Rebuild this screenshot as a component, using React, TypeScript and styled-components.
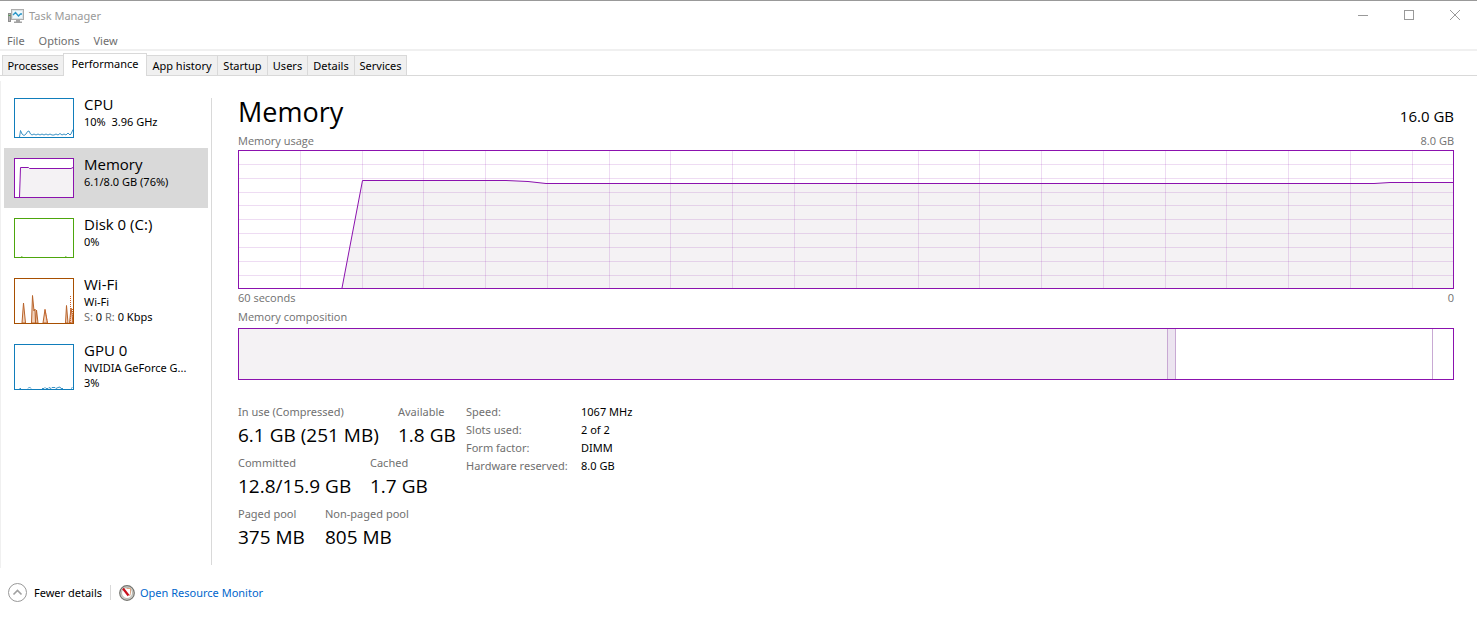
import React, { useState } from 'react';
import styled, { createGlobalStyle } from 'styled-components';

const purple = '#8b12ae';
const blue = '#117dbb';
const green = '#4da60c';
const brown = '#a74f01';
const displayFont = '"Open Sans", "Noto Sans", sans-serif';

const GlobalStyle = createGlobalStyle`
  *, *::before, *::after { box-sizing: border-box; }
  body {
    margin: 0;
    background: #fff;
    color: #000;
    font-family: "Noto Sans", "Open Sans", sans-serif;
    font-size: 11px;
    line-height: 16px;
  }
  button { font: inherit; color: inherit; }
  h1, h2, p, dl, dd, figure { margin: 0; font-weight: 400; }
`;

const Window = styled.div`
  display: flex;
  flex-direction: column;
  min-height: 100vh;
  border-top: 1px solid #999;
`;

const TitleBar = styled.header`
  display: flex;
  align-items: center;
  height: 29px;
  padding-left: 8px;
  color: #999;
`;

const AppTitle = styled.span`
  flex: 1;
  margin-left: 5px;
`;

const CaptionButton = styled.button`
  display: grid;
  place-items: center;
  width: 46px;
  height: 29px;
  padding: 0 0 0 3px;
  border: 0;
  background: none;
  color: #999;
`;

const MenuBar = styled.nav`
  display: flex;
  height: 21px;
  padding-top: 2px;
  border-bottom: 2px solid #f0f0f0;
`;

const MenuButton = styled.button`
  padding: 0 7px;
  border: 0;
  background: none;
  color: #6d6d6d;
`;

const TabStrip = styled.div`
  display: flex;
  align-items: flex-end;
  height: 25px;
  padding-left: 2px;
  border-bottom: 1px solid #d9d9d9;
`;

const Tab = styled.button<{ $width: number }>`
  width: ${p => p.$width}px;
  height: 20px;
  padding: 0;
  border: 1px solid #d9d9d9;
  border-width: 1px 1px 0 0;
  background: #f0f0f0;
  white-space: nowrap;
  &:first-child { border-left-width: 1px; }
  &[aria-selected='true'] {
    height: 23px;
    margin: 0 0 -1px -1px;
    padding-bottom: 2px;
    border-left-width: 1px;
    background: #fff;
  }
`;

const Content = styled.div`
  display: flex;
  margin-top: 5px;
  padding-bottom: 3px;
  border-left: 1px solid #f0f0f0;
`;

const Sidebar = styled.nav`
  flex: none;
  width: 204px;
  margin: 7px 3px 0;
`;

const Resource = styled.button`
  display: flex;
  align-items: flex-start;
  gap: 10px;
  width: 100%;
  padding: 10px;
  border: 0;
  background: none;
  text-align: left;
  &[aria-pressed='true'] { background: #d9d9d9; }
`;

const Thumb = styled.svg`
  flex: none;
  width: 60px;
  background: #fff;
`;

const ResourceText = styled.span`
  display: block;
  min-width: 0;
  margin-bottom: -6px;
`;

const ResourceName = styled.span`
  display: block;
  height: 16px;
  font-family: ${displayFont};
  font-size: 15px;
  line-height: 12px;
`;

const ResourceLine = styled.span`
  display: block;
  line-height: 15px;
  white-space: nowrap;
`;

const Muted = styled.span`
  color: #707070;
`;

const Main = styled.main`
  flex: 1;
  min-width: 0;
  margin-top: 17px;
  padding: 0 23px 0 26px;
  border-left: 1px solid #d9d9d9;
`;

const Heading = styled.div`
  display: flex;
  justify-content: space-between;
  align-items: baseline;
  height: 35px;
  font-family: ${displayFont};
`;

const Title = styled.h1`
  font-size: 27px;
  line-height: 27px;
`;

const Total = styled.span`
  font-size: 15px;
`;

const Caption = styled.div`
  display: flex;
  justify-content: space-between;
  height: 17px;
  font-family: ${displayFont};
  color: #707070;
`;

const UsageChart = styled.svg`
  display: block;
  width: 100%;
  height: 139px;
`;

const AxisRow = styled(Caption)`
  height: 20px;
  padding-top: 1px;
`;

const CompositionBar = styled.div`
  display: flex;
  height: 52px;
  margin-top: 2px;
  border: 1px solid ${purple};
`;

const Segment = styled.div<{ $share: number; $fill: string }>`
  flex: ${p => p.$share} 1 0;
  background: ${p => p.$fill};
  & + & { border-left: 1px solid #c8a9d3; }
`;

const Details = styled.div`
  display: flex;
  gap: 12px;
  padding: 24px 0 8px;
`;

const StatColumn = styled.div`
  width: 216px;
`;

const StatRow = styled.dl`
  display: flex;
  gap: 20px;
  height: 51px;
`;

const Stat = styled.div<{ $width: number }>`
  width: ${p => p.$width}px;
  white-space: nowrap;
`;

const StatLabel = styled.dt`
  color: #707070;
`;

const StatValue = styled.dd`
  font-family: ${displayFont};
  font-size: 19px;
  line-height: 30px;
`;

const Facts = styled.table`
  align-self: flex-start;
  border-collapse: collapse;
  line-height: 18px;
  margin-top: -1px;
  th {
    width: 115px;
    padding: 0;
    font-weight: 400;
    text-align: left;
    color: #707070;
  }
  td { padding: 0; }
`;

const Footer = styled.footer`
  display: flex;
  align-items: center;
  height: 49px;
  padding-left: 8px;
`;

const FewerButton = styled.button`
  display: flex;
  align-items: center;
  gap: 7px;
  height: 20px;
  padding: 0 8px 0 0;
  border: 0;
  background: none;
`;

const Rule = styled.span`
  width: 1px;
  height: 15px;
  margin-right: 8px;
  background: #d9d9d9;
`;

const MonitorLink = styled.a`
  display: flex;
  align-items: center;
  gap: 5px;
  color: #0066cc;
  text-decoration: none;
`;

const AppIcon = () => (
  <svg width="16" height="16" viewBox="0 0 16 16" aria-hidden="true">
    <rect x="0.5" y="5.5" width="2" height="8" fill="#b4b4b4" stroke="#8e8e8e" />
    <path d="M0.500 7.500h2" stroke="#4f9a4f" />
    <rect x="3.500" y="1.500" width="12" height="10" fill="#eef8fd" stroke="#adadad" />
    <rect x="4.500" y="2.500" width="10" height="8" fill="none" stroke="#d9e2e6" />
    <path d="M5 7 7.500 4.500l3 3.500 2-2H14" fill="none" stroke="#2996c8" strokeWidth="1.300" />
    <path d="M8 12h4v1.500h2V15H6v-1.500h2z" fill="#a3a3a3" />
  </svg>
);

const ChevronIcon = () => (
  <svg width="19" height="19" viewBox="0 0 19 19" aria-hidden="true">
    <circle cx="9.500" cy="9.500" r="9" fill="#fff" stroke="#999" />
    <path d="M5.500 11.500l4-4 4 4" fill="none" stroke="#a0a0a0" strokeWidth="1.600" />
  </svg>
);

const GaugeIcon = () => (
  <svg width="16" height="16" viewBox="0 0 16 16" aria-hidden="true">
    <circle cx="8" cy="8" r="7.300" fill="#d5d5d0" stroke="#73736e" strokeWidth="1.200" />
    <circle cx="8" cy="8" r="5.500" fill="#fff" stroke="#aaa9a0" strokeWidth="0.800" />
    <path d="M7.500 3.500H11.500V8.500L10.500 11" fill="none" stroke="#d9a283" />
    <path d="M4 3.500 9.500 10.500" stroke="#c9101c" strokeWidth="2.200" />
  </svg>
);

const frame = (h: number, color: string) => (
  <rect x="0.5" y="0.5" width="59" height={h - 1} fill="none" stroke={color} />
);

const CpuThumb = () => (
  <Thumb viewBox="0 0 60 40" height="40" aria-hidden="true">
    <path
      d="M5.500 39 6.500 32.500 8 36 10 37.500 12 36 13.500 33.500 15 33 16.500 36 18 37 20 36 22 37 24 36 26 37 28 36 30 37 32 36 34 37 36 36 38 37 40 37 42 36 44 37 46 35.500 48 37 50 36 52 37 54 35 56 37 57 36 59 31.500"
      fill="none" stroke="#3b93c6"
    />
    {frame(40, blue)}
  </Thumb>
);

const MemoryThumb = () => (
  <Thumb viewBox="0 0 60 40" height="40" aria-hidden="true">
    <path d="M5.500 39 6.500 9.500H14.500L15.500 10.500H57L59 9.500V39z" fill="#f4f2f4" />
    <path d="M5.500 39 6.500 9.500H14.500L15.500 10.500H57L59 9.500" fill="none" stroke={purple} />
    {frame(40, purple)}
  </Thumb>
);

const DiskThumb = () => (
  <Thumb viewBox="0 0 60 40" height="40" aria-hidden="true">
    <path d="M7 38.500h1.500M51 38.500h1.500" stroke="#9ccc7a" />
    {frame(40, green)}
  </Thumb>
);

const WifiThumb = () => (
  <Thumb viewBox="0 0 60 46" height="46" aria-hidden="true">
    <path
      d="M8 45 9.500 25 11.500 45zM17.500 45 18.500 17.500 20 33 21 31 21.500 45 22.500 32 24 45zM29 45 31 31.500 33.500 45zM51.500 45 52.500 27.500 54 45zM55.500 45 57 30 58 36 59 45z"
      fill="#f2d3bd" stroke="#b8632a"
    />
    <path d="M31 31.500 33.500 45M56.500 18V45M58.500 31V45" fill="none" stroke="#d0622a" strokeDasharray="1 1" />
    {frame(46, brown)}
  </Thumb>
);

const GpuThumb = () => (
  <Thumb viewBox="0 0 60 46" height="46" aria-hidden="true">
    <path
      d="M5.500 44.500h1.500M14 44.500 15.500 43 17 44.500M28 44.500h2l1-1 1 1h2l1-1 2 1 1-1h3l1 1 2-1 2-.5 1 1.500h2M57 44.500l1.500-1"
      fill="none" stroke="#3b93c6"
    />
    {frame(46, blue)}
  </Thumb>
);

const resources = [
  { name: 'CPU', thumb: <CpuThumb />, lines: ['10%\u00a0 3.96 GHz'] },
  { name: 'Memory', thumb: <MemoryThumb />, lines: ['6.1/8.0 GB (76%)'] },
  { name: 'Disk 0 (C:)', thumb: <DiskThumb />, lines: ['0%'] },
  {
    name: 'Wi-Fi',
    thumb: <WifiThumb />,
    lines: ['Wi-Fi', <><Muted>S:</Muted> 0 <Muted>R:</Muted> 0 Kbps</>],
  },
  { name: 'GPU 0', thumb: <GpuThumb />, lines: ['NVIDIA GeForce G...', '3%'] },
];

const tabs = [
  { label: 'Processes', width: 62 },
  { label: 'Performance', width: 84 },
  { label: 'App history', width: 71 },
  { label: 'Startup', width: 50 },
  { label: 'Users', width: 40 },
  { label: 'Details', width: 47 },
  { label: 'Services', width: 52 },
];

const stats = [
  [
    { label: 'In use (Compressed)', value: '6.1 GB (251 MB)', width: 140 },
    { label: 'Available', value: '1.8 GB', width: 56 },
  ],
  [
    { label: 'Committed', value: '12.8/15.9 GB', width: 112 },
    { label: 'Cached', value: '1.7 GB', width: 56 },
  ],
  [
    { label: 'Paged pool', value: '375 MB', width: 67 },
    { label: 'Non-paged pool', value: '805 MB', width: 88 },
  ],
];

const facts = [
  ['Speed:', '1067 MHz'],
  ['Slots used:', '2 of 2'],
  ['Form factor:', 'DIMM'],
  ['Hardware reserved:', '8.0 GB'],
];

const columns = Array.from({ length: 19 }, (_, i) => Math.round((i + 1) * 61.78) + 0.5);
const rows = Array.from({ length: 9 }, (_, i) => Math.round((i + 1) * 13.85) + 0.5);
const usageLine = 'M104 138 124.500 30.500H268L290 31.500 308 33.500H1136L1152 32.500H1215';

export default function App() {
  const [tab, setTab] = useState('Performance');
  const [resource, setResource] = useState('Memory');

  return (
    <>
      <GlobalStyle />
      <Window>
        <TitleBar>
          <AppIcon />
          <AppTitle>Task Manager</AppTitle>
          <CaptionButton aria-label="Minimize">
            <svg width="11" height="11"><path d="M0 5.500h10" stroke="currentColor" /></svg>
          </CaptionButton>
          <CaptionButton aria-label="Maximize">
            <svg width="11" height="11"><rect x="0.5" y="0.5" width="9" height="9" fill="none" stroke="currentColor" /></svg>
          </CaptionButton>
          <CaptionButton aria-label="Close">
            <svg width="11" height="11"><path d="M0 0l10 10M10 0 0 10" stroke="currentColor" /></svg>
          </CaptionButton>
        </TitleBar>
        <MenuBar>
          {['File', 'Options', 'View'].map(m => <MenuButton key={m}>{m}</MenuButton>)}
        </MenuBar>
        <TabStrip role="tablist">
          {tabs.map(t => (
            <Tab
              key={t.label}
              role="tab"
              $width={t.width}
              aria-selected={tab === t.label}
              onClick={() => setTab(t.label)}
            >
              {t.label}
            </Tab>
          ))}
        </TabStrip>
        <Content>
          <Sidebar>
            {resources.map(r => (
              <Resource key={r.name} aria-pressed={resource === r.name} onClick={() => setResource(r.name)}>
                {r.thumb}
                <ResourceText>
                  <ResourceName>{r.name}</ResourceName>
                  {r.lines.map((line, i) => <ResourceLine key={i}>{line}</ResourceLine>)}
                </ResourceText>
              </Resource>
            ))}
          </Sidebar>
          <Main>
            <Heading>
              <Title>Memory</Title>
              <Total>16.0 GB</Total>
            </Heading>
            <Caption><span>Memory usage</span><span>8.0 GB</span></Caption>
            <UsageChart viewBox="0 0 1216 139" preserveAspectRatio="none" role="img" aria-label="Memory usage">
              <path d={`${usageLine}V138z`} fill="#f4f2f4" />
              <g stroke={purple} strokeOpacity="0.15">
                {columns.map(x => <path key={x} d={`M${x} 1V138`} />)}
                {rows.map(y => <path key={y} d={`M1 ${y}H1215`} />)}
              </g>
              <path d={usageLine} fill="none" stroke={purple} />
              <rect x="0.5" y="0.5" width="1215" height="138" fill="none" stroke={purple} />
            </UsageChart>
            <AxisRow><span>60 seconds</span><span>0</span></AxisRow>
            <Caption>Memory composition</Caption>
            <CompositionBar>
              <Segment $share={928} $fill="#f4f2f4" />
              <Segment $share={7} $fill="#ece4f0" />
              <Segment $share={256} $fill="#fff" />
              <Segment $share={20} $fill="#fff" />
            </CompositionBar>
            <Details>
              <StatColumn>
                {stats.map(row => (
                  <StatRow key={row[0].label}>
                    {row.map(s => (
                      <Stat key={s.label} $width={s.width}>
                        <StatLabel>{s.label}</StatLabel>
                        <StatValue>{s.value}</StatValue>
                      </Stat>
                    ))}
                  </StatRow>
                ))}
              </StatColumn>
              <Facts>
                <tbody>
                  {facts.map(([label, value]) => (
                    <tr key={label}><th scope="row">{label}</th><td>{value}</td></tr>
                  ))}
                </tbody>
              </Facts>
            </Details>
          </Main>
        </Content>
        <Footer>
          <FewerButton><ChevronIcon />Fewer details</FewerButton>
          <Rule />
          <MonitorLink href="#resource-monitor"><GaugeIcon />Open Resource Monitor</MonitorLink>
        </Footer>
      </Window>
    </>
  );
}
